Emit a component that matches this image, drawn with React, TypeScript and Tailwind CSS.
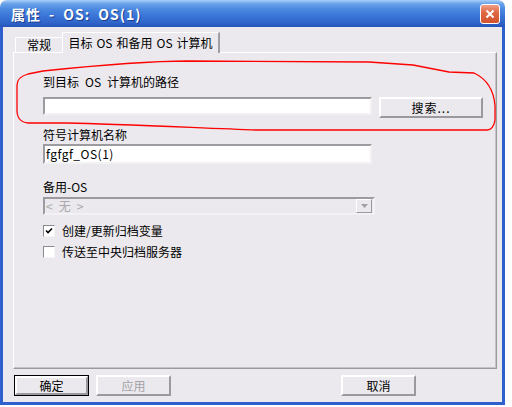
import type { ReactNode } from "react";

const face = "bg-[#ebe9ed]";

function Field({ className = "", children }: { className?: string; children?: ReactNode }) {
  return (
    <div
      className={`flex items-center border-2 border-t-[#9c9ca0] border-l-[#9c9ca0] border-b-[#f2f1f4] border-r-[#f2f1f4] pl-[1px] ${className}`}
    >
      {children}
    </div>
  );
}

function Btn({
  width,
  disabled,
  isDefault,
  children,
}: {
  width: string;
  disabled?: boolean;
  isDefault?: boolean;
  children: ReactNode;
}) {
  const inner = (
    <div
      className={`flex h-full w-full items-center justify-center border-2 border-t-white border-l-white border-b-[#9a9a9e] border-r-[#9a9a9e] ${face} ${
        disabled ? "text-[#a3a3a8]" : "text-black"
      }`}
    >
      {children}
    </div>
  );
  return (
    <div className={`${width} h-[21px] ${isDefault ? "border border-black" : ""}`}>{inner}</div>
  );
}

function Checkbox({ checked, label }: { checked: boolean; label: string }) {
  return (
    <div className="flex h-[14px] items-center">
      <div className="flex h-[12px] w-[12px] items-center justify-center border border-t-[#8a8a8e] border-l-[#8a8a8e] border-b-[#f4f4f6] border-r-[#f4f4f6] bg-white">
        {checked && (
          <svg width="8" height="8" viewBox="0 0 8 8">
            <path d="M1 3.5 L3 5.5 L7 1.5" stroke="#000" strokeWidth="1.6" fill="none" />
          </svg>
        )}
      </div>
      <span className="ml-[7px] leading-[14px]">{label}</span>
    </div>
  );
}

export default function App() {
  return (
    <div className="relative h-[407px] w-[512px] bg-white font-['Noto_Sans_CJK_SC',sans-serif] text-[12px] text-black">
      <div className="flex h-[405px] w-[505px] flex-col overflow-hidden rounded-t-[7px]">
        {/* title bar */}
        <div className="flex h-[27px] shrink-0 items-center bg-[linear-gradient(to_bottom,#a9cff7_0%,#6aa3ea_14%,#4a88e0_35%,#3a74d6_60%,#2f63c8_85%,#2654bb_100%)] pl-[11px] pr-[5px]">
          <span className="text-[14px] font-bold leading-[16px] tracking-[1px] text-white [text-shadow:1px_1px_0_#1c3c8c]">
            {"属性\u2002-\u2002OS:\u2002OS(1)"}
          </span>
          <div className="ml-auto flex h-[20px] w-[20px] items-center justify-center rounded-[3px] border border-white bg-[linear-gradient(to_bottom,#f0a08a_0%,#e06a45_40%,#d2522c_100%)]">
            <svg width="10" height="10" viewBox="0 0 10 10">
              <path d="M1.5 1.5 L8.5 8.5 M8.5 1.5 L1.5 8.5" stroke="#fff" strokeWidth="2" />
            </svg>
          </div>
        </div>

        {/* body */}
        <div className={`flex flex-1 flex-col border-x-[3px] border-b-[3px] border-[#2e5fcc] ${face} pl-[10px] pr-[6px] pt-[5px]`}>
          {/* tabs */}
          <div className="relative z-10 flex h-[20px] items-end pl-[2px]">
            <div className="flex h-[15px] w-[47px] items-center justify-center border-t border-l border-white leading-[14px]">
              常规
            </div>
            <div className={`-mb-px flex h-[21px] w-[158px] items-center justify-center border-t border-l border-white border-r-2 border-r-[#a0a0a4] ${face} leading-[14px]`}>
              {"目标\u2004OS\u2004和备用\u2004OS\u2004计算机"}
            </div>
          </div>

          {/* panel */}
          <div className="flex h-[317px] w-[484px] flex-col border border-t-white border-l-white border-b-[#9a9a9e] border-r-[#9a9a9e] pl-[29px] pt-[22px] shadow-[inset_-1px_-1px_0_#c4c4c8]">
            <div className="h-[14px] leading-[14px]">{"到目标\u2002OS\u2002计算机的路径"}</div>
            <div className="mt-[8px] flex items-start">
              <Field className="h-[18px] w-[329px] bg-white" />
              <div className="ml-[7px]">
                <Btn width="w-[104px]">
                  <span className="leading-[14px] tracking-[1px]">搜索...</span>
                </Btn>
              </div>
            </div>

            <div className="mt-[10px] h-[14px] leading-[14px]">符号计算机名称</div>
            <Field className="mt-[2px] h-[20px] w-[329px] bg-white">
              <span className="leading-[14px] tracking-[0.5px]">fgfgf_OS(1)</span>
            </Field>

            <div className="mt-[16px] h-[14px] leading-[14px]">备用-OS</div>
            <Field className={`mt-[3px] h-[18px] w-[332px] ${face} pr-px`}>
              <span className="leading-[14px] text-[#a8a8ac]">{"<\u2002无\u2002>"}</span>
              <div className="ml-auto flex h-[14px] w-[16px] items-center justify-center border border-t-white border-l-white border-b-[#9a9a9e] border-r-[#9a9a9e]">
                <svg width="7" height="4" viewBox="0 0 7 4">
                  <path d="M0 0 H7 L3.5 4 Z" fill="#a0a0a4" />
                </svg>
              </div>
            </Field>

            <div className="mt-[9px]">
              <Checkbox checked label="创建/更新归档变量" />
            </div>
            <div className="mt-[7px]">
              <Checkbox checked={false} label="传送至中央归档服务器" />
            </div>
          </div>

          {/* dialog buttons */}
          <div className="mt-[6px] flex items-start pl-px">
            <Btn width="w-[75px]" isDefault>
              <span className="leading-[14px]">确定</span>
            </Btn>
            <div className="ml-[7px]">
              <Btn width="w-[75px]" disabled>
                <span className="leading-[14px]">应用</span>
              </Btn>
            </div>
            <div className="ml-[170px]">
              <Btn width="w-[75px]">
                <span className="leading-[14px]">取消</span>
              </Btn>
            </div>
          </div>
        </div>
      </div>

      {/* hand-drawn red annotation */}
      <svg className="pointer-events-none absolute left-0 top-0" width="512" height="407" viewBox="0 0 512 407">
        <path
          d="M188 61 L369 62 L413 65 L449 72 L474 73 C489 80 494 92 495 106 L495 120 C494 126 491 130 487 130 L256 130 C200 128 120 124 67 123 L28 123 C20 122 17 118 17 110 L17 85 C17 79 21 76 28 74 L43 71 C100 65 150 61 188 61 Z"
          fill="none"
          stroke="#ff0000"
          strokeWidth="1.3"
        />
      </svg>
    </div>
  );
}
